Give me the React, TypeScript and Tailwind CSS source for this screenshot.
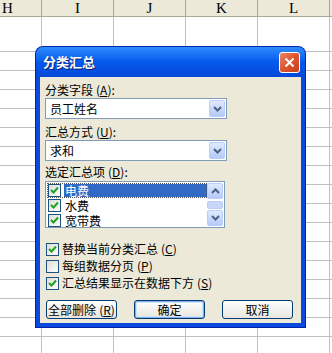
import React from "react";

const cjk = { fontFamily: '"Noto Sans CJK SC", "Liberation Sans", sans-serif' };

function Mn({ k }: { k: string }) {
  return (
    <span className="ml-[3px]">
      (<span className="underline">{k}</span>)
    </span>
  );
}

function Check({ on }: { on: boolean }) {
  return (
    <span className="flex h-[13px] w-[13px] shrink-0 items-center justify-center border border-[#1C5180] bg-gradient-to-br from-[#DCDCD7] to-white">
      {on && (
        <svg width="9" height="9" viewBox="0 0 9 9">
          <path d="M1 4 L3.5 6.5 L8 1.5" fill="none" stroke="#21A121" strokeWidth="2" />
        </svg>
      )}
    </span>
  );
}

function Arrow({ up }: { up?: boolean }) {
  return (
    <svg width="9" height="6" viewBox="0 0 9 6">
      <path d={up ? "M1 5 L4.5 1.5 L8 5" : "M1 1 L4.5 4.5 L8 1"} fill="none" stroke="#4D6185" strokeWidth="2" />
    </svg>
  );
}

function Combo({ value }: { value: string }) {
  return (
    <div className="flex h-[21px] w-[182px] items-center border border-[#7F9DB9] bg-white p-[1px]">
      <span className="flex-1 pl-[3px] text-[12px] text-black">{value}</span>
      <span className="flex h-full w-[16px] items-center justify-center rounded-[2px] border border-[#B9CDF8] bg-gradient-to-b from-[#E0EAFE] to-[#B4CAF8]">
        <Arrow />
      </span>
    </div>
  );
}

function Btn({ children, main }: { children: React.ReactNode; main?: boolean }) {
  return (
    <div
      className={`flex h-[19px] w-[71px] items-center justify-center rounded-[3px] border border-[#003C74] bg-gradient-to-b from-white to-[#E6E5DD] text-[12px] text-black ${
        main ? "shadow-[inset_0_0_0_1px_#89ADE4,inset_0_0_0_2px_#CEE7FF]" : ""
      }`}
    >
      {children}
    </div>
  );
}

export default function App() {
  const headers = ["H", "I", "J", "K", "L"];
  const widths = ["w-[42px]", "w-[72px]", "w-[72px]", "w-[72px]", "w-[72px]"];
  const rows = Array.from({ length: 16 });
  const items: [string, boolean][] = [
    ["电费", true],
    ["水费", false],
    ["宽带费", false],
  ];

  return (
    <div className="relative h-[353px] w-[332px] overflow-hidden bg-white" style={cjk}>
      {/* sheet */}
      <div className="flex h-[17px] border-b border-[#ACA899] bg-[#ECE9D8]">
        {headers.map((h, i) => (
          <div
            key={h}
            className={`${widths[i]} shrink-0 border-r border-[#ACA899] text-[15px] leading-[16px] text-black ${i === 0 ? "pl-[2px]" : "text-center"}`}
            style={{ fontFamily: '"Liberation Serif", serif' }}
          >
            {h}
          </div>
        ))}
        <div className="flex-1" />
      </div>
      <div className="flex h-[35px] border-b border-[#C0C0C0]">
        {widths.map((w, i) => (
          <div key={i} className={`${w} shrink-0 border-r border-[#C0C0C0]`} />
        ))}
      </div>
      {rows.map((_, r) => (
        <div key={r} className="flex h-[19px] border-b border-[#C0C0C0]">
          {widths.map((w, i) => (
            <div key={i} className={`${w} shrink-0 border-r border-[#C0C0C0]`} />
          ))}
        </div>
      ))}

      {/* dialog */}
      <div className="absolute left-[36px] top-[47px] flex h-[280px] w-[269px] flex-col rounded-t-[7px] bg-[#0A48DE] shadow-[0_0_0_1px_#0026A8]">
        <div className="relative flex h-[30px] shrink-0 items-center rounded-t-[7px] bg-gradient-to-b from-[#2F8CFF] via-[#0558EC] to-[#0548D8] pl-[7px]">
          <span className="text-[13px] font-bold text-white [text-shadow:1px_1px_0_#0A1E6E]">分类汇总</span>
          <div className="absolute left-[243px] top-[5px] flex h-[21px] w-[21px] items-center justify-center rounded-[3px] border border-white bg-gradient-to-br from-[#E88461] via-[#E0542B] to-[#C4401C]">
            <svg width="11" height="11" viewBox="0 0 11 11">
              <path d="M1.5 1.5 L9.5 9.5 M9.5 1.5 L1.5 9.5" stroke="white" strokeWidth="2" />
            </svg>
          </div>
        </div>
        <div className="mx-[4px] mb-[4px] flex flex-1 flex-col bg-[#ECE9D8] pl-[5px] text-[12px] leading-[14px] text-black">
          <div className="mt-[6px]">
            分类字段<Mn k="A" />:
          </div>
          <div className="mt-[1px]">
            <Combo value="员工姓名" />
          </div>
          <div className="mt-[6px]">
            汇总方式<Mn k="U" />:
          </div>
          <div className="mt-[1px]">
            <Combo value="求和" />
          </div>
          <div className="mt-[4px]">
            选定汇总项<Mn k="D" />:
          </div>
          <div className="mt-[2px] flex h-[47px] w-[180px] overflow-hidden border border-[#7F9DB9] bg-white p-[1px]">
            <div className="flex flex-1 flex-col">
              {items.map(([t, sel]) => (
                <div
                  key={t}
                  className={`flex h-[15px] shrink-0 items-center gap-[3px] pl-[1px] leading-[13px] ${sel ? "outline-1 outline-dotted outline-offset-[-1px] outline-[#555]" : ""}`}
                >
                  <Check on />
                  <span className={`flex-1 pl-[1px] ${sel ? "bg-[#316AC5] text-white" : ""}`}>{t}</span>
                </div>
              ))}
            </div>
            <div className="flex w-[16px] flex-col justify-between">
              <span className="flex h-[16px] items-center justify-center rounded-[2px] border border-[#B9CDF8] bg-gradient-to-b from-[#E0EAFE] to-[#B4CAF8]">
                <Arrow up />
              </span>
              <span className="h-[8px] rounded-[2px] border border-[#B9CDF8] bg-[#C8D6F8]" />
              <span className="flex h-[16px] items-center justify-center rounded-[2px] border border-[#B9CDF8] bg-gradient-to-b from-[#E0EAFE] to-[#B4CAF8]">
                <Arrow />
              </span>
            </div>
          </div>
          <div className="mt-[14px] flex flex-col gap-[3px] pl-[1px]">
            <div className="flex items-center gap-[3px]">
              <Check on />
              <span>
                替换当前分类汇总<Mn k="C" />
              </span>
            </div>
            <div className="flex items-center gap-[3px]">
              <Check on={false} />
              <span>
                每组数据分页<Mn k="P" />
              </span>
            </div>
            <div className="flex items-center gap-[3px]">
              <Check on />
              <span>
                汇总结果显示在数据下方<Mn k="S" />
              </span>
            </div>
          </div>
          <div className="mt-[10px] flex gap-[17px] pl-[1px]">
            <Btn>
              全部删除<Mn k="R" />
            </Btn>
            <Btn main>确定</Btn>
            <Btn>取消</Btn>
          </div>
        </div>
      </div>
    </div>
  );
}
